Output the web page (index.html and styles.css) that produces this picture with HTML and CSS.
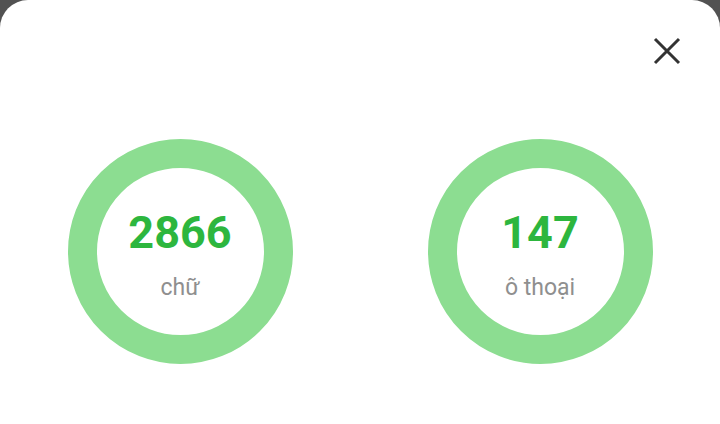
FILE: index.html
```html
<!DOCTYPE html>
<html>
<head>
  <link rel="stylesheet" href="styles.css">
</head>
<body>
<div class="sheet">
  <div class="sheet-head">
    <button class="close" type="button" title="close">
      <svg width="28" height="28" viewBox="0 0 28 28">
        <path d="M2 2 L26 26 M26 2 L2 26" stroke="#333" stroke-width="3" fill="none"/>
      </svg>
    </button>
  </div>
  <div class="stats">
    <div class="stat">
      <div class="ring">
        <span class="num">2866</span>
        <span class="unit">chữ</span>
      </div>
    </div>
    <div class="stat">
      <div class="ring">
        <span class="num">147</span>
        <span class="unit">ô thoại</span>
      </div>
    </div>
  </div>
</div>
</body>
</html>
```

FILE: styles.css
```css
html, body {
    margin: 0;
    height: 100%;
    background: #525252;
    font-family: Roboto, "Noto Sans", Arial, sans-serif;
}
.sheet {
    background: white;
    height: 100%;
    border-radius: 28px 28px 0 0;
    overflow: hidden;
}
.sheet-head {
    display: flex;
    justify-content: flex-end;
    padding: 31px 33px 0 0;
}
.close {
    width: 40px;
    height: 40px;
    border: none;
    background: none;
    padding: 0;
    display: flex;
    align-items: center;
    justify-content: center;
    cursor: pointer;
}
.stats {
    display: grid;
    grid-template-columns: 1fr 1fr;
    margin-top: 68px;
}
.stat {
    display: flex;
    justify-content: center;
}
.ring {
    width: 225px;
    height: 225px;
    box-sizing: border-box;
    border: 29px solid #8cdd91;
    border-radius: 50%;
    padding-top: 4px;
    display: flex;
    flex-direction: column;
    align-items: center;
    justify-content: center;
}
.num {
    font-size: 45px;
    font-weight: 700;
    color: #2db63e;
    line-height: 52px;
}
.unit {
    font-size: 23px;
    color: #8f8f8f;
    margin-top: 16px;
    line-height: 26px;
}
```
